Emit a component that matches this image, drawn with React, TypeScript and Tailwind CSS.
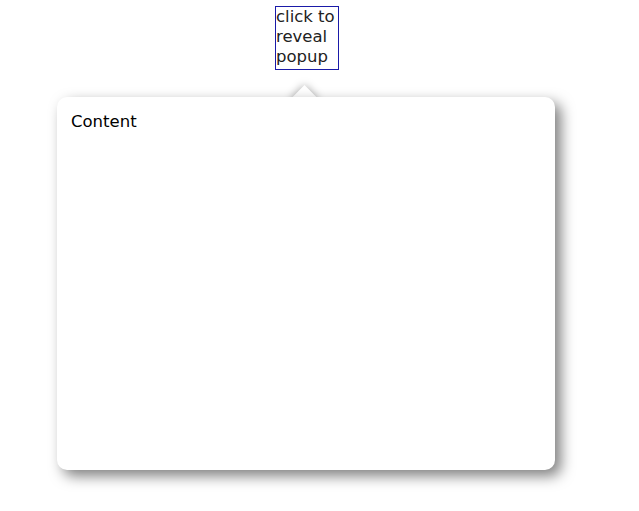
export default function App() {
  return (
    <div className="w-[639px] h-[511px] bg-white font-['DejaVu_Sans',Verdana,sans-serif] text-[16.5px] text-[#222]">
      <div className="pt-[6px] pl-[275px]">
        <div className="w-[64px] border border-[#1a1aa8] leading-[20px] pb-[2px]">click to reveal popup</div>
      </div>
      <div className="relative ml-[57px] mt-[27px] w-[498px] h-[373px]">
        <div className="absolute left-[238px] top-[-8px] w-[19px] h-[19px] rotate-45 bg-white shadow-[0_0_8px_rgba(0,0,0,0.35)]" />
        <div className="relative h-full rounded-[10px] bg-white shadow-[6px_6px_14px_rgba(0,0,0,0.5)] px-[14px] py-[13px] text-[16.5px] text-black">
          Content
        </div>
      </div>
    </div>
  );
}
